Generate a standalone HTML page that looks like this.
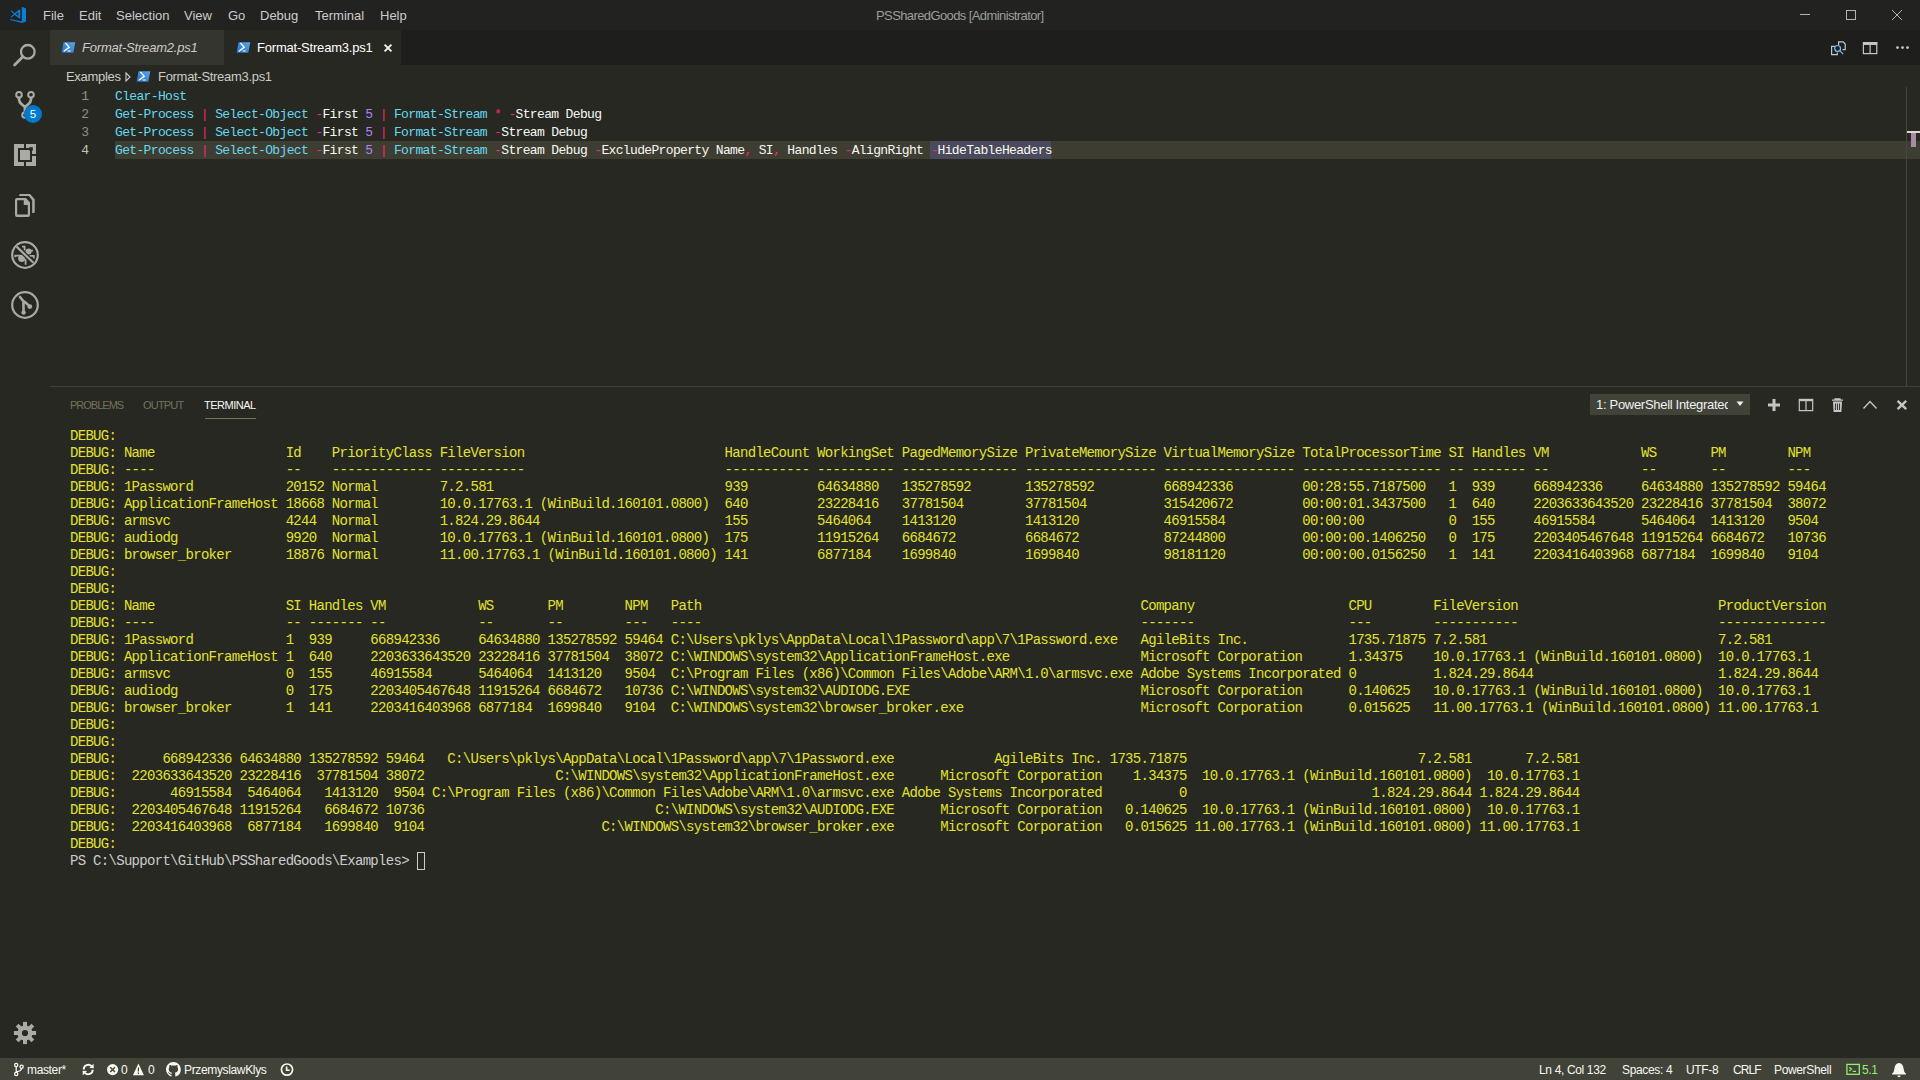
<!DOCTYPE html><html><head><meta charset="utf-8"><style>
*{margin:0;padding:0;box-sizing:border-box}
html,body{width:1920px;height:1080px;overflow:hidden;background:#272822;font-family:"Liberation Sans",sans-serif}
.abs{position:absolute}
#title{left:0;top:0;width:1920px;height:30px;background:#222220;color:#cccccc;font-size:13px}
#title .m{position:absolute;top:8px;white-space:nowrap}
#tabs{left:50px;top:30px;width:1870px;height:35px;background:#1e1f1c}
#act{left:0;top:30px;width:50px;height:1028px;background:#272822}
#bc{left:50px;top:65px;width:1870px;height:22px;background:#272822;color:#ccccc7;font-size:13px}
#editor{left:50px;top:87px;width:1870px;height:299px;background:#272822}
.code{position:absolute;font-family:"Liberation Mono",monospace;font-size:13px;letter-spacing:-0.65px;white-space:pre;height:18px;line-height:18px}
.ln{position:absolute;font-family:"Liberation Mono",monospace;font-size:13px;white-space:pre;height:18px;line-height:18px;color:#90908a;text-align:right;width:39px;left:0}
.f{color:#66d9ef}.o{color:#f92672}.w{color:#f8f8f2}.n{color:#ae81ff}
#panel{left:50px;top:386px;width:1870px;height:672px;background:#272822;border-top:1px solid #414339}
.pt{position:absolute;top:12px;font-size:11px;color:#75715e;letter-spacing:0px}
.term{position:absolute;left:20px;font-family:"Liberation Mono",monospace;font-size:14px;letter-spacing:-0.7px;white-space:pre;height:17px;line-height:17px;color:#e2e22e}
#status{left:0;top:1058px;width:1920px;height:22px;background:#414339;color:#f8f8f2;font-size:12px}
#status .s{position:absolute;top:5px;white-space:nowrap;letter-spacing:-0.35px}
</style></head><body>
<div id="title" class="abs">
<span class="m" style="left:43px">File</span>
<span class="m" style="left:79px">Edit</span>
<span class="m" style="left:116px">Selection</span>
<span class="m" style="left:184px">View</span>
<span class="m" style="left:228px">Go</span>
<span class="m" style="left:260px">Debug</span>
<span class="m" style="left:315px">Terminal</span>
<span class="m" style="left:380px">Help</span>
<span class="m" style="left:876px;color:#9d9d9b;letter-spacing:-0.6px">PSSharedGoods [Administrator]</span>
<svg class="abs" style="left:0;top:0" width="50" height="30" viewBox="0 0 50 30">
<path fill="#0b7fd4" d="M21.8 6.8 L26 8.4 L26 21.6 L21.8 23.1 Z"/>
<path fill="#0b7fd4" d="M10 19 L22 21.4 L22 23.1 L10.2 19.9 Z"/>
<path fill="#0b7fd4" fill-rule="evenodd" d="M13.4 14 L19.4 9.4 Q20.2 9 20.2 10 L20.2 18 Q20.2 18.8 19.4 18.4 Z M15.8 14 L18.3 12.1 L18.3 15.9 Z"/>
<path fill="#0b7fd4" d="M10.7 11.2 L11.5 10.5 L15 13.4 L14.3 14.2 Z M10.7 16.8 L11.5 17.5 L15 14.6 L14.3 13.8 Z"/>
</svg>
<svg class="abs" style="left:1790px;top:0" width="130" height="30" viewBox="1790 0 130 30">
<rect x="1800" y="14" width="10" height="1" fill="#b4b4b2"/>
<rect x="1846.5" y="10.5" width="9" height="9" fill="none" stroke="#b4b4b2" stroke-width="1"/>
<path d="M1892 10 L1902 20 M1902 10 L1892 20" stroke="#b4b4b2" stroke-width="1"/>
</svg>
</div>
<div id="tabs" class="abs">
<div class="abs" style="left:0;top:0;width:174px;height:35px;background:#34352f"></div>
<div class="abs" style="left:174px;top:0;width:177px;height:35px;background:#272822"></div>
<span class="abs" style="left:32px;top:10px;font-size:13px;font-style:italic;color:#ccccc7;letter-spacing:-0.2px">Format-Stream2.ps1</span>
<span class="abs" style="left:207px;top:10px;font-size:13px;color:#ffffff;letter-spacing:-0.2px">Format-Stream3.ps1</span>
<svg class="abs" style="left:330px;top:10px" width="16" height="16" viewBox="0 0 16 16"><path d="M4.6 4.6 L11.4 11.4 M11.4 4.6 L4.6 11.4" stroke="#f0f0f0" stroke-width="2"/></svg>
</div>
<svg class="abs" style="left:61px;top:42px" width="16" height="13" viewBox="0 0 16 13">
<defs><linearGradient id="psg61" x1="0" y1="1" x2="1" y2="0"><stop offset="0" stop-color="#1f6fc4"/><stop offset="1" stop-color="#5ea6ea"/></linearGradient></defs>
<path d="M2.6 0.3 L14.3 0.3 L12.3 10.8 L0.6 10.8 Z" fill="url(#psg61)"/>
<path d="M4.8 1.4 L8.2 5.4 L3.2 9" stroke="#fff" stroke-width="1.4" fill="none" stroke-linecap="round"/>
<path d="M6.6 9 L9.8 9" stroke="#e8e8e8" stroke-width="1.2"/>
</svg>
<svg class="abs" style="left:236px;top:42px" width="16" height="13" viewBox="0 0 16 13">
<defs><linearGradient id="psg236" x1="0" y1="1" x2="1" y2="0"><stop offset="0" stop-color="#1f6fc4"/><stop offset="1" stop-color="#5ea6ea"/></linearGradient></defs>
<path d="M2.6 0.3 L14.3 0.3 L12.3 10.8 L0.6 10.8 Z" fill="url(#psg236)"/>
<path d="M4.8 1.4 L8.2 5.4 L3.2 9" stroke="#fff" stroke-width="1.4" fill="none" stroke-linecap="round"/>
<path d="M6.6 9 L9.8 9" stroke="#e8e8e8" stroke-width="1.2"/>
</svg>
<svg class="abs" style="left:1820px;top:30px" width="100" height="35" viewBox="1820 30 100 35">
<path d="M1838.6 45 V41.8 H1843.2 L1845.2 44 V49.6 H1842.6" stroke="#c5c5c5" stroke-width="1.2" fill="none"/>
<path d="M1834.8 46.3 H1831.6 V54.6 H1837.3 V52.6" stroke="#c5c5c5" stroke-width="1.2" fill="none"/>
<circle cx="1837.6" cy="48.4" r="2.9" stroke="#75beff" stroke-width="1.2" fill="none"/>
<path d="M1839.8 50.6 L1843.2 54.2" stroke="#75beff" stroke-width="1.2"/>
<rect x="1863.4" y="42.6" width="13.4" height="11" fill="none" stroke="#c5c5c5" stroke-width="1.2"/>
<rect x="1863" y="42" width="14.2" height="3" fill="#c5c5c5"/>
<rect x="1869.5" y="42" width="1.2" height="12" fill="#c5c5c5"/>
<circle cx="1897.5" cy="47.6" r="1.4" fill="#c5c5c5"/>
<circle cx="1902.5" cy="47.6" r="1.4" fill="#c5c5c5"/>
<circle cx="1907.5" cy="47.6" r="1.4" fill="#c5c5c5"/>
</svg>
<div id="act" class="abs"></div>
<svg class="abs" style="left:0;top:0" width="50" height="1058" viewBox="0 0 50 1058">
<circle cx="27.8" cy="51.8" r="6.8" fill="none" stroke="#a9aaa3" stroke-width="2.3"/>
<path d="M22.8 56.8 L14.6 65" stroke="#a9aaa3" stroke-width="2.8" stroke-linecap="round"/>
<circle cx="19" cy="94.8" r="2.8" fill="none" stroke="#a9aaa3" stroke-width="2"/>
<circle cx="31" cy="94.8" r="2.8" fill="none" stroke="#a9aaa3" stroke-width="2"/>
<circle cx="25" cy="115" r="2.8" fill="none" stroke="#a9aaa3" stroke-width="2"/>
<path d="M19 97.7 L19 99.5 Q19 102 22 104.5 L25 107 L28 104.5 Q31 102 31 99.5 L31 97.7 M25 106 L25 112.1" stroke="#a9aaa3" stroke-width="2.8" fill="none"/>
<circle cx="33" cy="114" r="9" fill="#007acc"/>
<text x="33" y="118.2" fill="#fff" font-family="Liberation Sans" font-size="11.5" text-anchor="middle">5</text>
<rect x="14" y="144" width="22" height="22" fill="#a9aaa3"/>
<rect x="18" y="148" width="14" height="14" fill="#272822"/>
<rect x="20" y="150" width="10" height="10" fill="#a9aaa3"/>
<rect x="24" y="144" width="2" height="4" fill="#272822"/>
<rect x="24" y="162" width="2" height="4" fill="#272822"/>
<rect x="32" y="154" width="4" height="2" fill="#272822"/>
<rect x="29.3" y="147.2" width="3.5" height="3.5" fill="#272822"/>
<path fill="#a9aaa3" fill-rule="evenodd" d="M17 198 H26 L30 202.5 V215 Q30 217 28 217 H17 Q15 217 15 215 V200 Q15 198 17 198 Z M17.2 200.3 V214.6 H27.8 V205.1 H23.75 V200.3 Z"/>
<path fill="#a9aaa3" d="M19.8 193.9 H30 L34.7 199.3 V211.8 Q34.7 213 33.3 213 H32.2 V200.3 L28.8 196.1 H18.9 Z"/>
<circle cx="25" cy="255" r="12.8" fill="none" stroke="#a9aaa3" stroke-width="2.2"/>
<circle cx="21.7" cy="258.3" r="3.6" fill="#a9aaa3"/>
<circle cx="28.6" cy="251.4" r="3" fill="#a9aaa3"/>
<path d="M15.3 257.3 V255.6 H20.5 M22 246.6 H24.6 V250.5 M29.8 250.6 H33 M29.5 255.8 H33.8 V258.6 M25.6 259.3 V264.8" stroke="#a9aaa3" stroke-width="1.8" fill="none"/>
<path d="M16.6 246.6 L33.4 262.8" stroke="#272822" stroke-width="4.4"/>
<path d="M16.6 246.6 L33.4 262.8" stroke="#a9aaa3" stroke-width="2.2"/>
<circle cx="25" cy="305" r="12.8" fill="none" stroke="#a9aaa3" stroke-width="2.2"/>
<path d="M20 297 L23.4 301.3 L23.6 312.4 M24.6 301.8 L29.8 306.4" stroke="#a9aaa3" stroke-width="2.6" fill="none" stroke-linecap="round"/>
<circle cx="23.6" cy="312.6" r="2.2" fill="#a9aaa3"/>
<circle cx="29.8" cy="306.6" r="2.4" fill="#a9aaa3"/>
<g transform="translate(25 1033)" fill="#a9aaa3">
<circle r="7.6"/>
<rect x="-2" y="-11.1" width="4" height="22.2"/>
<rect x="-2" y="-11.1" width="4" height="22.2" transform="rotate(45)"/>
<rect x="-2" y="-11.1" width="4" height="22.2" transform="rotate(90)"/>
<rect x="-2" y="-11.1" width="4" height="22.2" transform="rotate(135)"/>
<circle r="3.1" fill="#272822"/>
</g>
</svg>
<div id="bc" class="abs"><span class="abs" style="left:16px;top:4px;letter-spacing:-0.3px">Examples</span><span class="abs" style="left:108px;top:4px;letter-spacing:-0.3px">Format-Stream3.ps1</span>
<svg class="abs" style="left:75px;top:7px" width="6" height="10" viewBox="0 0 6 10"><path d="M1 1 L5 5 L1 9 Z" fill="none" stroke="#ccccc7" stroke-width="1.1"/></svg>
</div>
<svg class="abs" style="left:136px;top:71px" width="16" height="13" viewBox="0 0 16 13">
<defs><linearGradient id="psg136" x1="0" y1="1" x2="1" y2="0"><stop offset="0" stop-color="#1f6fc4"/><stop offset="1" stop-color="#5ea6ea"/></linearGradient></defs>
<path d="M2.6 0.3 L14.3 0.3 L12.3 10.8 L0.6 10.8 Z" fill="url(#psg136)"/>
<path d="M4.8 1.4 L8.2 5.4 L3.2 9" stroke="#fff" stroke-width="1.4" fill="none" stroke-linecap="round"/>
<path d="M6.6 9 L9.8 9" stroke="#e8e8e8" stroke-width="1.2"/>
</svg>
<div id="editor" class="abs">
<div class="abs" style="left:65px;top:54px;width:1805px;height:18px;background:#3e3d32"></div>
<div class="abs" style="left:880px;top:54px;width:121px;height:18px;background:#4a4a5c"></div>
<div class="ln" style="top:1px;color:#90908a">1</div>
<div class="code" style="left:65px;top:1px"><span class="f">Clear-Host</span></div>
<div class="ln" style="top:19px;color:#90908a">2</div>
<div class="code" style="left:65px;top:19px"><span class="f">Get-Process</span><span class="w"> </span><span class="o">|</span><span class="w"> </span><span class="f">Select-Object</span><span class="w"> </span><span class="o">-</span><span class="w">First </span><span class="n">5</span><span class="w"> </span><span class="o">|</span><span class="w"> </span><span class="f">Format-Stream</span><span class="w"> </span><span class="o">*</span><span class="w"> </span><span class="o">-</span><span class="w">Stream Debug</span></div>
<div class="ln" style="top:37px;color:#90908a">3</div>
<div class="code" style="left:65px;top:37px"><span class="f">Get-Process</span><span class="w"> </span><span class="o">|</span><span class="w"> </span><span class="f">Select-Object</span><span class="w"> </span><span class="o">-</span><span class="w">First </span><span class="n">5</span><span class="w"> </span><span class="o">|</span><span class="w"> </span><span class="f">Format-Stream</span><span class="w"> </span><span class="o">-</span><span class="w">Stream Debug</span></div>
<div class="ln" style="top:55px;color:#c2c2bf">4</div>
<div class="code" style="left:65px;top:55px"><span class="f">Get-Process</span><span class="w"> </span><span class="o">|</span><span class="w"> </span><span class="f">Select-Object</span><span class="w"> </span><span class="o">-</span><span class="w">First </span><span class="n">5</span><span class="w"> </span><span class="o">|</span><span class="w"> </span><span class="f">Format-Stream</span><span class="w"> </span><span class="o">-</span><span class="w">Stream Debug </span><span class="o">-</span><span class="w">ExcludeProperty Name</span><span class="o">,</span><span class="w"> SI</span><span class="o">,</span><span class="w"> Handles </span><span class="o">-</span><span class="w">AlignRight </span><span class="o">-</span><span class="w">HideTableHeaders</span></div>
<div class="abs" style="left:1856px;top:0;width:1px;height:299px;background:#46473f"></div>
<div class="abs" style="left:1857px;top:44px;width:13px;height:2px;background:#d8d8d0"></div>
<div class="abs" style="left:1861px;top:46px;width:5px;height:14px;background:#a88aa8"></div>
</div>
<div id="panel" class="abs">
<span class="pt" style="left:20px;letter-spacing:-1px">PROBLEMS</span><span class="pt" style="left:93px;letter-spacing:-0.8px">OUTPUT</span><span class="pt" style="left:154px;color:#f8f8f2;letter-spacing:-0.5px">TERMINAL</span>
<div class="abs" style="left:155px;top:31px;width:51px;height:1px;background:#75715e"></div>
<div class="term" style="top:41px">DEBUG:</div>
<div class="term" style="top:58px">DEBUG: Name                 Id    PriorityClass FileVersion                          HandleCount WorkingSet PagedMemorySize PrivateMemorySize VirtualMemorySize TotalProcessorTime SI Handles VM            WS       PM        NPM</div>
<div class="term" style="top:75px">DEBUG: ----                 --    ------------- -----------                          ----------- ---------- --------------- ----------------- ----------------- ------------------ -- ------- --            --       --        ---</div>
<div class="term" style="top:92px">DEBUG: 1Password            20152 Normal        7.2.581                              939         64634880   135278592       135278592         668942336         00:28:55.7187500   1  939     668942336     64634880 135278592 59464</div>
<div class="term" style="top:109px">DEBUG: ApplicationFrameHost 18668 Normal        10.0.17763.1 (WinBuild.160101.0800)  640         23228416   37781504        37781504          315420672         00:00:01.3437500   1  640     2203633643520 23228416 37781504  38072</div>
<div class="term" style="top:126px">DEBUG: armsvc               4244  Normal        1.824.29.8644                        155         5464064    1413120         1413120           46915584          00:00:00           0  155     46915584      5464064  1413120   9504</div>
<div class="term" style="top:143px">DEBUG: audiodg              9920  Normal        10.0.17763.1 (WinBuild.160101.0800)  175         11915264   6684672         6684672           87244800          00:00:00.1406250   0  175     2203405467648 11915264 6684672   10736</div>
<div class="term" style="top:160px">DEBUG: browser_broker       18876 Normal        11.00.17763.1 (WinBuild.160101.0800) 141         6877184    1699840         1699840           98181120          00:00:00.0156250   1  141     2203416403968 6877184  1699840   9104</div>
<div class="term" style="top:177px">DEBUG:</div>
<div class="term" style="top:194px">DEBUG:</div>
<div class="term" style="top:211px">DEBUG: Name                 SI Handles VM            WS       PM        NPM   Path                                                         Company                    CPU        FileVersion                          ProductVersion</div>
<div class="term" style="top:228px">DEBUG: ----                 -- ------- --            --       --        ---   ----                                                         -------                    ---        -----------                          --------------</div>
<div class="term" style="top:245px">DEBUG: 1Password            1  939     668942336     64634880 135278592 59464 C:\Users\pklys\AppData\Local\1Password\app\7\1Password.exe   AgileBits Inc.             1735.71875 7.2.581                              7.2.581</div>
<div class="term" style="top:262px">DEBUG: ApplicationFrameHost 1  640     2203633643520 23228416 37781504  38072 C:\WINDOWS\system32\ApplicationFrameHost.exe                 Microsoft Corporation      1.34375    10.0.17763.1 (WinBuild.160101.0800)  10.0.17763.1</div>
<div class="term" style="top:279px">DEBUG: armsvc               0  155     46915584      5464064  1413120   9504  C:\Program Files (x86)\Common Files\Adobe\ARM\1.0\armsvc.exe Adobe Systems Incorporated 0          1.824.29.8644                        1.824.29.8644</div>
<div class="term" style="top:296px">DEBUG: audiodg              0  175     2203405467648 11915264 6684672   10736 C:\WINDOWS\system32\AUDIODG.EXE                              Microsoft Corporation      0.140625   10.0.17763.1 (WinBuild.160101.0800)  10.0.17763.1</div>
<div class="term" style="top:313px">DEBUG: browser_broker       1  141     2203416403968 6877184  1699840   9104  C:\WINDOWS\system32\browser_broker.exe                       Microsoft Corporation      0.015625   11.00.17763.1 (WinBuild.160101.0800) 11.00.17763.1</div>
<div class="term" style="top:330px">DEBUG:</div>
<div class="term" style="top:347px">DEBUG:</div>
<div class="term" style="top:364px">DEBUG:      668942336 64634880 135278592 59464   C:\Users\pklys\AppData\Local\1Password\app\7\1Password.exe             AgileBits Inc. 1735.71875                              7.2.581       7.2.581</div>
<div class="term" style="top:381px">DEBUG:  2203633643520 23228416  37781504 38072                 C:\WINDOWS\system32\ApplicationFrameHost.exe      Microsoft Corporation    1.34375  10.0.17763.1 (WinBuild.160101.0800)  10.0.17763.1</div>
<div class="term" style="top:398px">DEBUG:       46915584  5464064   1413120  9504 C:\Program Files (x86)\Common Files\Adobe\ARM\1.0\armsvc.exe Adobe Systems Incorporated          0                        1.824.29.8644 1.824.29.8644</div>
<div class="term" style="top:415px">DEBUG:  2203405467648 11915264   6684672 10736                              C:\WINDOWS\system32\AUDIODG.EXE      Microsoft Corporation   0.140625  10.0.17763.1 (WinBuild.160101.0800)  10.0.17763.1</div>
<div class="term" style="top:432px">DEBUG:  2203416403968  6877184   1699840  9104                       C:\WINDOWS\system32\browser_broker.exe      Microsoft Corporation   0.015625 11.00.17763.1 (WinBuild.160101.0800) 11.00.17763.1</div>
<div class="term" style="top:449px">DEBUG:</div>
<div class="term" style="top:466px;color:#cccccc">PS C:\Support\GitHub\PSSharedGoods\Examples&gt; </div>
<div class="abs" style="left:367px;top:465px;width:8px;height:18px;border:1px solid #cccccc"></div>
</div>
<svg class="abs" style="left:1590px;top:386px" width="330" height="40" viewBox="1590 386 330 40">
<rect x="1590" y="394" width="160" height="21" fill="#414339"/>
<path d="M1736.5 401.5 L1743.5 401.5 L1740 406 Z" fill="#f0f0f0"/>
<path d="M1774 399 V411 M1768 405 H1780" stroke="#c5c5c5" stroke-width="3"/>
<rect x="1799.3" y="399.4" width="13.4" height="11.2" fill="none" stroke="#c5c5c5" stroke-width="1.2"/>
<rect x="1799" y="399" width="14" height="2.2" fill="#c5c5c5"/>
<rect x="1805.4" y="399" width="1.2" height="12" fill="#c5c5c5"/>
<path d="M1832 400.2 H1843 M1835 400 V398.8 H1840 V400" stroke="#c5c5c5" stroke-width="1.3" fill="none"/>
<path d="M1833 401.5 H1842 L1841.4 412 H1833.6 Z" fill="#c5c5c5"/>
<path d="M1835.5 403.5 V410 M1837.5 403.5 V410 M1839.5 403.5 V410" stroke="#272822" stroke-width="0.9"/>
<path d="M1863.5 408.6 L1870 401.6 L1876.5 408.6" stroke="#c5c5c5" stroke-width="1.4" fill="none"/>
<path d="M1897.6 400.8 L1906.2 409.2 M1906.2 400.8 L1897.6 409.2" stroke="#c5c5c5" stroke-width="2.4"/>
</svg>
<span class="abs" style="left:1596px;top:397px;font-size:13px;color:#f0f0f0;white-space:nowrap;width:132px;overflow:hidden;letter-spacing:-0.3px">1: PowerShell Integrated Console</span>
<div id="status" class="abs">
<span class="s" style="left:27px">master*</span>
<span class="s" style="left:121px">0</span>
<span class="s" style="left:148px">0</span>
<span class="s" style="left:184px">PrzemyslawKlys</span>
<span class="s" style="left:1539px">Ln 4, Col 132</span>
<span class="s" style="left:1622px">Spaces: 4</span>
<span class="s" style="left:1686px">UTF-8</span>
<span class="s" style="left:1774px">PowerShell</span>
<span class="s" style="left:1733px;letter-spacing:-0.9px">CRLF</span>
<span class="s" style="left:1862px;color:#8ef06e">5.1</span>
</div>
<svg class="abs" style="left:0;top:1058px" width="1920" height="22" viewBox="0 1058 1920 22">
<g stroke="#f8f8f2" fill="none" stroke-width="1.3">
<circle cx="16.2" cy="1065" r="1.6"/>
<circle cx="16.2" cy="1074" r="1.6"/>
<circle cx="21.6" cy="1066.7" r="1.6"/>
<path d="M16.2 1066.6 V1072.4 M21.6 1068.3 Q21.4 1071 16.5 1072"/>
</g>
<g stroke="#f8f8f2" fill="none" stroke-width="1.9">
<path d="M83.7 1069.4 A4.6 4.6 0 0 1 91.6 1066.2"/>
<path d="M92.7 1069.7 A4.6 4.6 0 0 1 84.8 1072.9"/>
</g>
<path d="M93.6 1063.8 L93.8 1068.3 L89.3 1068.1 Z M82.8 1075.3 L82.6 1070.8 L87.1 1071 Z" fill="#f8f8f2"/>
<circle cx="112.6" cy="1069.6" r="5.6" fill="#f8f8f2"/>
<path d="M110.2 1067.2 L115 1072 M115 1067.2 L110.2 1072" stroke="#414339" stroke-width="1.4"/>
<path d="M138.4 1063.6 L143.9 1075.2 L132.9 1075.2 Z" fill="#f8f8f2"/>
<path d="M138.4 1067.4 V1071.6 M138.4 1072.6 V1074" stroke="#414339" stroke-width="1.2"/>
<path transform="translate(166 1062) scale(0.925)" fill="#f8f8f2" d="M8 0C3.58 0 0 3.58 0 8c0 3.54 2.29 6.53 5.47 7.59.4.07.55-.17.55-.38 0-.19-.01-.82-.01-1.49-2.01.37-2.53-.49-2.69-.94-.09-.23-.48-.94-.82-1.13-.28-.15-.68-.52-.01-.53.63-.01 1.08.58 1.23.82.72 1.210 1.87.87 2.33.66.07-.52.28-.87.51-1.07-1.78-.2-3.640-.89-3.64-3.950 0-.87.31-1.59.82-2.15-.08-.2-.36-1.02.08-2.12 0 0 .67-.21 2.2.82.64-.18 1.32-.27 2-.27.68 0 1.36.09 2 .27 1.53-1.04 2.2-.82 2.2-.82.44 1.1.16 1.92.08 2.12.51.56.82 1.27.82 2.15 0 3.07-1.87 3.75-3.65 3.95.29.25.54.73.54 1.48 0 1.07-.01 1.93-.01 2.2 0 .21.15.46.55.38A8.013 8.013 0 0016 8c0-4.42-3.58-8-8-8z"/>
<circle cx="287" cy="1069.6" r="5.6" fill="none" stroke="#f8f8f2" stroke-width="1.7"/>
<path d="M286.6 1066.4 V1070.2 H289.6" stroke="#f8f8f2" stroke-width="1.6" fill="none"/>
<rect x="1846.9" y="1064.4" width="12.4" height="9.9" fill="none" stroke="#8ef06e" stroke-width="1.3"/>
<path d="M1849.2 1067.3 L1851.6 1069.1 L1849.2 1070.9 M1852.6 1071.4 H1856" stroke="#8ef06e" stroke-width="1.2" fill="none"/>
<path d="M1899 1063 Q1903.2 1063.6 1903.6 1068.8 Q1903.8 1072.2 1906 1073.8 L1906 1074.6 H1892 L1892 1073.8 Q1894.2 1072.2 1894.4 1068.8 Q1894.8 1063.6 1899 1063 Z" fill="#f8f8f2"/>
<path d="M1897.4 1075.6 A1.6 1.6 0 0 0 1900.6 1075.6 Z" fill="#f8f8f2"/>
</svg>
</body></html>
